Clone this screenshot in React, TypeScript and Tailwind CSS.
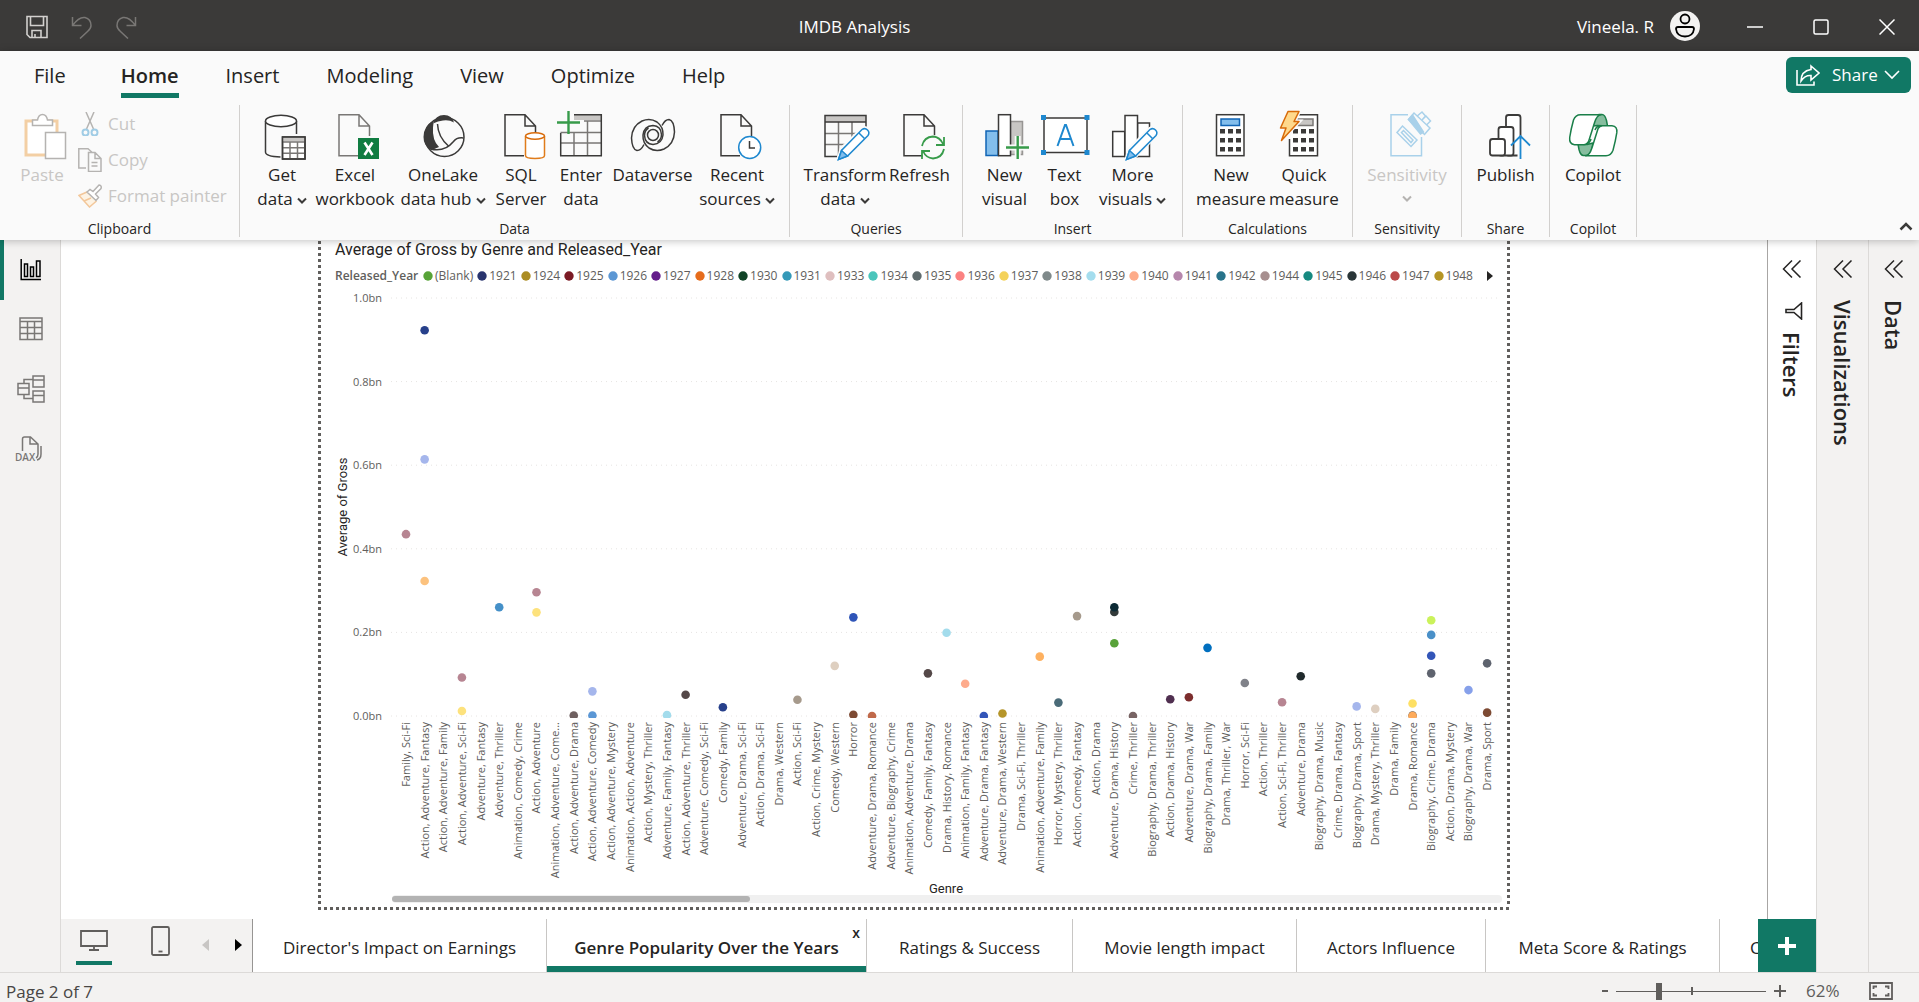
import React from 'react';

type Kids = { children: React.ReactNode };

/* ---------- ribbon icons (48 x 48) ---------- */

const DARK = '#3b3a39';

function Big({ children }: Kids) {
  return (
    <svg viewBox="0 0 48 48" className="h-12 w-12 shrink-0 overflow-visible" fill="none" strokeWidth="1.5" stroke={DARK} aria-hidden="true">
      {children}
    </svg>
  );
}

function PageShape({ color = DARK }: { color?: string }) {
  return <path d="M38.5 25V15L28 3.7H8v41h19M28 3.7V15h10.5" stroke={color} />;
}

function Pencil() {
  return (
    <g>
      <path d="M17.5 48.5l3-10.5L41 18q3-2 5.500 .5t.5 5.500L27 44.500z" fill="#fafafa" stroke="#fafafa" strokeWidth="4" />
      <path d="M17.500 48.500l3-9L41 18.500q3-2 5.500 .5t.5 5.500L26.500 45z" fill="#fff" stroke="#1e88cf" />
      <path d="M17.500 48.500l3-9 6 5.500z" fill="#83beec" stroke="#1e88cf" />
      <path d="M38 22l5.500 5.500" stroke="#1e88cf" />
    </g>
  );
}

function GetDataIcon() {
  return (
    <Big>
      <path d="M7.500 10v31q0 4.500 15 5M38.500 10v13" />
      <ellipse cx="23" cy="10" rx="15.500" ry="5.700" fill="#fff" />
      <rect x="24.500" y="26" width="22.500" height="22" fill="#fff" />
      <rect x="25" y="26.500" width="21.500" height="4" fill="#c8c6c4" stroke="none" />
      <path d="M24.500 31H47M24.500 36.700H47M24.500 42.300H47M32 31v17M39.500 31v17" stroke="#797775" />
      <rect x="24.500" y="26" width="22.500" height="22" />
    </Big>
  );
}

function ExcelIcon() {
  return (
    <Big>
      <PageShape color="#797775" />
      <rect x="27" y="27" width="21" height="21" fill="#107c41" stroke="none" />
      <path d="M33.500 31.500l8 12.500M41.500 31.500l-8 12.500" stroke="#fff" strokeWidth="2.600" />
    </Big>
  );
}

function OneLakeIcon() {
  return (
    <Big>
      <circle cx="25.500" cy="26" r="19.500" fill="#fafafa" />
      <path d="M14.500 9.500Q4.500 15 4.500 26q0 8 6.500 12.500 4 0 9-2.500Q13 29 14 16.500q.5-4 .5-7z" fill={DARK} stroke="none" />
      <path d="M14 12.500q2.500-8.500 11-8.500 8 0 10 7.500-5-3-11-2-5 .7-10 3z" fill={DARK} stroke="none" />
      <path d="M18.500 13Q19 26 29.500 35M11.500 38q14 3.500 23-7.500 3.500-4.500 10-3.500" />
    </Big>
  );
}

function SqlIcon() {
  return (
    <Big>
      <PageShape />
      <path d="M28.500 25v19.500q0 3 9.500 3t9.500-3V25" fill="#fff" stroke="#e07c1b" />
      <ellipse cx="38" cy="25" rx="9.500" ry="3.200" fill="#fff" stroke="#d86b0a" />
    </Big>
  );
}

function EnterDataIcon() {
  return (
    <Big>
      <rect x="17" y="4" width="27" height="5" fill="#c8c6c4" stroke="none" />
      <path d="M27 10H44M27 21.500H44M3.500 21.500H27M3.500 32H44M17 21.500v23M30.500 10v34.500" stroke="#797775" />
      <path d="M17 3.700h27.300v41H3.700V22" />
      <path d="M0 11.500h23M11.500 0v23" stroke="#379b4a" strokeWidth="2.400" />
    </Big>
  );
}

function DataverseIcon() {
  return (
    <Big>
      <circle cx="24" cy="24" r="5.500" />
      <path d="M33 14.500q3-6 7-6 5 1 5.500 12.500Q45 33 35 38q-8 3.500-15-1-6.500-5-6-13 1-9 10-9.500 8 .5 8.500 9 0 5-4 7.500" />
      <path d="M15 33.500q-3 6-7 6-5-1-5.500-12.500Q3 15 13 10q8-3.500 15 1 6.500 5 6 13-1 9-10 9.500-8-.5-8.500-9 0-5 4-7.500" />
    </Big>
  );
}

function RecentIcon() {
  return (
    <Big>
      <PageShape />
      <circle cx="36.700" cy="36.500" r="11" fill="#fff" stroke="#1e88cf" />
      <path d="M36.500 30v7h5.500" />
    </Big>
  );
}

function TransformIcon() {
  return (
    <Big>
      <rect x="4" y="5" width="41" height="6" fill="#c8c6c4" stroke="none" />
      <path d="M4 22.500h33M4 33.500h23M17.500 11v34M31 11v18" stroke="#797775" />
      <path d="M45 18V4.500H4v41h12M4 11h41" />
      <Pencil />
    </Big>
  );
}

function RefreshIcon() {
  return (
    <Big>
      <PageShape />
      <circle cx="37" cy="37" r="13" fill="#fafafa" stroke="none" />
      <path d="M26 35q2-9 11-9.500 7 .5 10 7.500M48 26v8h-8M48 38q-2 9-11 9.500-7-.5-10-7.500M26 48v-8h8" stroke="#379b4a" strokeWidth="1.800" />
    </Big>
  );
}

function NewVisualIcon() {
  return (
    <Big>
      <rect x="29.500" y="10.500" width="12" height="33" fill="#c8c6c4" stroke="#979593" />
      <rect x="5" y="20" width="12" height="24.500" fill="#83beec" stroke="#1164b4" />
      <rect x="17.500" y="3.700" width="12" height="41" fill="#fff" />
      <path d="M25 36.500h23M36.700 25v23" stroke="#fafafa" strokeWidth="6" />
      <path d="M25 36.500h23M36.700 25v23" stroke="#379b4a" strokeWidth="2.400" />
    </Big>
  );
}

function TextBoxIcon() {
  return (
    <Big>
      <rect x="3" y="7" width="43" height="34.500" fill="#fff" />
      <path d="M16.500 35L24 14h1l7.500 21M19 28h11" stroke="#1e88cf" strokeWidth="2" />
      <g fill="#1e88cf" stroke="none">
        <rect x="0" y="4" width="5" height="5" />
        <rect x="43.500" y="4" width="5" height="5" />
        <rect x="0" y="39" width="5" height="5" />
        <rect x="43.500" y="39" width="5" height="5" />
      </g>
    </Big>
  );
}

function MoreVisualsIcon() {
  return (
    <Big>
      <rect x="28.500" y="12" width="12" height="33.500" fill="#fff" />
      <rect x="3.700" y="20.500" width="12" height="25" fill="#fff" />
      <rect x="16" y="4.500" width="12.500" height="41" fill="#fff" />
      <Pencil />
    </Big>
  );
}

function Keys() {
  return (
    <g fill={DARK} stroke="none">
      {[18, 27, 36].map((y) => [13, 21, 29].map((x) => <rect key={`${x}-${y}`} x={x} y={y} width="5" height="4.500" />))}
    </g>
  );
}

function MeasureIcon() {
  return (
    <Big>
      <rect x="9.500" y="3.700" width="27.500" height="41" fill="#fff" />
      <rect x="14" y="8" width="18.500" height="6.500" fill="#83beec" stroke="#1164b4" />
      <Keys />
    </Big>
  );
}

function QuickMeasureIcon() {
  return (
    <Big>
      <path d="M19 3.700h18.500v41H9.500V28" fill="#fff" />
      <rect x="18" y="8" width="15" height="6.500" fill="#c8c6c4" stroke="#797775" />
      <Keys />
      <path d="M8 .5h11L14 10.500h5L1.500 29.500 6 17H0z" fill="#fafafa" stroke="#fafafa" strokeWidth="4" />
      <path d="M8 .5h11L14 10.500h5L1.500 29.500 6 17H.5z" fill="#ffd98c" stroke="#d86b0a" strokeLinejoin="round" />
    </Big>
  );
}

function SensitivityIcon() {
  return (
    <Big>
      <g stroke="#a9d1ea">
        <path d="M25 3.700H8v41h30.500V26" />
        <path d="M33 6l6-5 3.500 4-3.500 4 4-4 4.500 5-6 6z" fill="#fafafa" />
        <path d="M25.500 8.500L31 2l16 15-5.500 6.500z" fill="#fafafa" />
        <path d="M25.500 8.500l4-4.500 11 17-3 2z" fill="#a9d1ea" />
        <path d="M14 21.500l5.500-6.500L34 29l-6 6.500z" fill="#fafafa" />
        <path d="M18.500 21.500l2-2L30 29l-2 2.500z" />
      </g>
    </Big>
  );
}

function PublishIcon() {
  return (
    <Big>
      <g fill="#fff" strokeWidth="1.800">
        <rect x="24" y="4" width="14.500" height="40.500" rx="2.500" />
        <rect x="16.500" y="16" width="15" height="28.500" rx="2.500" />
        <rect x="8" y="28" width="15" height="16.500" rx="2.500" />
      </g>
      <path d="M38.500 48V26" stroke="#fafafa" strokeWidth="6" />
      <path d="M38.500 48V25M29 34.500l9.500-9.500 9.500 9.500" stroke="#1e88cf" strokeWidth="1.800" />
    </Big>
  );
}

function CopilotIcon() {
  return (
    <Big>
      <g stroke="#1a7f49" strokeLinejoin="round">
        <path d="M24 15q1-11.500 6-11.500h3q3 0 4.500 6l1 5.500-10-.5zM24 32q-1.500 12.500-6.500 12.500h-3q-3 0-4.500-6L9 33l9 .5z" fill="#86bd9e" />
        <path d="M11.500 3.700H32q-4 0-6.500 8l-6 19q-1.500 3-4.500 3H5.500Q0 33 .7 26.500 2 18 4.500 9 6.500 3.700 11.500 3.700z" fill="#fff" />
        <path d="M37 44.700H16.500q4 0 6.500-8l6-19q1.500-3 4.500-3H43q5.500 .5 4.800 7-1.300 8.500-3.800 17.500-2 5.500-7 5.500z" fill="#fff" />
        <path d="M26 19q1.500-4 5-4M22 28q-1 4-5 5" />
      </g>
    </Big>
  );
}

function PasteIcon() {
  return (
    <Big>
      <rect x="8" y="10" width="31" height="34" fill="#fff" stroke="#f3cfa4" strokeWidth="3" />
      <path d="M14.500 14.500V9h5q1-5.500 5-5.500t5 5.500h5v5.500z" fill="#fff" stroke="#b5b3b1" />
      <rect x="27.500" y="21.500" width="20" height="26" fill="#fff" stroke="#b5b3b1" />
    </Big>
  );
}

/* ---------- small helpers ---------- */

function Chevron({ className }: { className: string }) {
  return (
    <svg viewBox="0 0 10 8" className={className} fill="none" stroke="currentColor" strokeWidth="2" aria-hidden="true">
      <path d="M1 1.500l4 4 4-4" />
    </svg>
  );
}

function RibbonButton({ icon, first, second, menu, disabled, width }: {
  icon: React.ReactNode; first: string; second?: string; menu?: boolean; disabled?: boolean; width: string;
}) {
  return (
    <button type="button" disabled={disabled} className={`flex shrink-0 flex-col items-center text-[17px] leading-6 whitespace-nowrap ${width} ${disabled ? 'text-[#c8c6c4]' : 'text-[#252423]'}`}>
      {icon}
      <span className="mt-1">{first}</span>
      {(second || menu) && (
        <span className="flex items-center gap-1">
          {second}
          {menu && <Chevron className={`h-2 w-2.5 ${disabled ? 'mt-2 text-[#b5b3b1]' : 'mt-1 text-[#3b3a39]'}`} />}
        </span>
      )}
    </button>
  );
}

function Group({ name, width, children }: Kids & { name: string; width: string }) {
  return (
    <section aria-label={name} className={`flex shrink-0 flex-col justify-between border-r border-[#d2d0ce] ${width}`}>
      <div className="flex justify-center pt-1.5">{children}</div>
      <h2 className="text-center text-sm leading-4 text-[#252423]">{name}</h2>
    </section>
  );
}

/* ---------- title bar ---------- */

function TitleBar() {
  return (
    <header className="grid h-[51px] shrink-0 grid-cols-[1fr_auto_1fr] items-center bg-[#3b3a39] text-[17px] leading-6 text-white">
      <div className="flex items-center gap-[22px] pl-[25px] pt-0.5">
        <button type="button" aria-label="Save">
          <svg viewBox="0 0 24 24" className="h-6 w-6" fill="none" stroke="#d2d0ce" strokeWidth="1.600">
            <path d="M2 1.500h20v21H5l-3-3zM5.500 1.500v9h13v-9M7 22.500v-7h9v7M10 22.500V19" />
          </svg>
        </button>
        <button type="button" aria-label="Undo">
          <svg viewBox="0 0 22 24" className="h-6 w-[22px]" fill="none" stroke="#797775" strokeWidth="1.500">
            <path d="M1.500 2v8.500h9M1.500 10.500Q8 1.500 14 2.500q6 1.500 6 8 0 3-3.500 6L9 23.500" />
          </svg>
        </button>
        <button type="button" aria-label="Redo">
          <svg viewBox="0 0 22 24" className="h-6 w-[22px]" fill="none" stroke="#797775" strokeWidth="1.500">
            <path d="M20.500 2v8.500h-9M20.500 10.500Q14 1.500 8 2.500q-6 1.500-6 8 0 3 3.500 6l7.500 7" />
          </svg>
        </button>
      </div>
      <h1 className="mr-[210px] pt-0.5">IMDB Analysis</h1>
      <div className="-ml-[210px] flex items-center justify-end">
        <span className="pt-0.5">Vineela. R</span>
        <svg viewBox="0 0 30 30" className="ml-4 h-[30px] w-[30px]" aria-hidden="true">
          <circle cx="15" cy="15" r="15" fill="#f3f2f1" />
          <circle cx="15" cy="8" r="4.500" fill="none" stroke="#000" strokeWidth="1.800" />
          <path d="M8 16h14q2 0 2 2-1 7.500-9 7.500T6 18q0-2 2-2z" fill="none" stroke="#000" strokeWidth="1.800" />
        </svg>
        <div className="ml-[47px] mr-6 flex items-center gap-[50px] pt-0.5">
          <button type="button" aria-label="Minimize">
            <svg viewBox="0 0 16 16" className="h-4 w-4" stroke="#fff" strokeWidth="1.500"><path d="M0 8h16" /></svg>
          </button>
          <button type="button" aria-label="Maximize">
            <svg viewBox="0 0 16 16" className="h-4 w-4" fill="none" stroke="#fff" strokeWidth="1.500"><rect x="1" y="1" width="14" height="14" rx="1.500" /></svg>
          </button>
          <button type="button" aria-label="Close">
            <svg viewBox="0 0 16 16" className="h-4 w-4" stroke="#fff" strokeWidth="1.500"><path d="M.5 .5l15 15M15.500 .5l-15 15" /></svg>
          </button>
        </div>
      </div>
    </header>
  );
}

/* ---------- ribbon ---------- */

function RibbonTabs() {
  const names = ['File', 'Home', 'Insert', 'Modeling', 'View', 'Optimize', 'Help'];
  return (
    <div className="flex h-[49px] items-start justify-between pl-[34px] pr-2">
      <nav className="flex gap-[47px] pt-[9px] text-[20px] leading-8 text-[#252423]">
        {names.map((n) => (
          <button key={n} type="button" className={`flex h-[38px] items-start border-b-[5px] ${n === 'Home' ? 'ml-2 border-[#117865] font-semibold' : 'border-transparent'}`}>
            {n}
          </button>
        ))}
      </nav>
      <button type="button" className="mt-1.5 flex h-9 w-[125px] items-center rounded-md bg-[#117865] pl-2.5 text-[17px] text-white">
        <svg viewBox="0 0 24 22" className="h-[22px] w-6" fill="none" stroke="#fff" strokeWidth="1.600">
          <path d="M1 6v15h17v-3.500M15 2l8 7-8 7v-4.500q-6-.5-10 5.500 0-10 10-11.500z" />
        </svg>
        <span className="ml-3">Share</span>
        <svg viewBox="0 0 16 10" className="ml-1.5 h-2.5 w-4" fill="none" stroke="#fff" strokeWidth="1.600"><path d="M1 1l7 7 7-7" /></svg>
      </button>
    </div>
  );
}

function Ribbon() {
  return (
    <div className="relative z-10 shrink-0 bg-[#fafafa] shadow-[0_1px_8px_rgba(0,0,0,0.25)]">
      <RibbonTabs />
      <div className="flex h-[140px] pb-[3px] pt-[5px]">
        <Group name="Clipboard" width="w-[240px]">
          <div className="flex w-full pl-[18px]">
            <RibbonButton icon={<PasteIcon />} first="Paste" disabled width="w-12" />
            <div className="ml-3 mt-px flex flex-col text-[17px] leading-6 text-[#c8c6c4]">
              <button type="button" disabled className="flex h-9 items-start gap-1.5">
                <svg viewBox="0 0 24 24" className="h-6 w-6" fill="none" strokeWidth="1.500" stroke="#b5b3b1">
                  <path d="M8 0l7.500 17M16 0L8.500 17" />
                  <circle cx="7.500" cy="20.500" r="3" stroke="#a0cce5" strokeWidth="2" />
                  <circle cx="16.500" cy="20.500" r="3" stroke="#a0cce5" strokeWidth="2" />
                </svg>
                Cut
              </button>
              <button type="button" disabled className="flex h-9 items-start gap-1.5">
                <svg viewBox="0 0 24 24" className="h-6 w-6" fill="none" strokeWidth="1.500" stroke="#b5b3b1">
                  <path d="M8 20H.8V.8H10l4 3.500M10.500 4.500H17l6 6v13H10.500zM17 4.500v6h6M13.500 14.500h6M13.500 18h6" />
                </svg>
                Copy
              </button>
              <button type="button" disabled className="flex h-8 items-start gap-1.5">
                <svg viewBox="0 0 24 24" className="h-6 w-6" fill="none" strokeWidth="1.500">
                  <path d="M9 8L1 11.500 11.500 23l7-6" stroke="#f3c79a" fill="#fdf3e4" />
                  <path d="M6 17l7-3" stroke="#f3c79a" />
                  <path d="M9 8l3-2.500 3 2 6-6.500q3 .5 2 3.500l-5.500 5.500 3 3.500-2.500 3z" stroke="#b5b3b1" fill="#fff" />
                </svg>
                Format painter
              </button>
            </div>
          </div>
        </Group>
        <Group name="Data" width="w-[550px]">
          <RibbonButton icon={<GetDataIcon />} first="Get" second="data" menu width="w-16" />
          <RibbonButton icon={<ExcelIcon />} first="Excel" second="workbook" width="w-[82px]" />
          <RibbonButton icon={<OneLakeIcon />} first="OneLake" second="data hub" menu width="w-[94px]" />
          <RibbonButton icon={<SqlIcon />} first="SQL" second="Server" width="w-[62px]" />
          <RibbonButton icon={<EnterDataIcon />} first="Enter" second="data" width="w-[58px]" />
          <RibbonButton icon={<DataverseIcon />} first="Dataverse" width="w-[85px]" />
          <RibbonButton icon={<RecentIcon />} first="Recent" second="sources" menu width="w-[84px]" />
        </Group>
        <Group name="Queries" width="w-[173px]">
          <RibbonButton icon={<TransformIcon />} first="Transform" second="data" menu width="w-[87px]" />
          <RibbonButton icon={<RefreshIcon />} first="Refresh" width="w-[62px]" />
        </Group>
        <Group name="Insert" width="w-[220px]">
          <RibbonButton icon={<NewVisualIcon />} first="New" second="visual" width="w-[58px]" />
          <RibbonButton icon={<TextBoxIcon />} first="Text" second="box" width="w-[62px]" />
          <RibbonButton icon={<MoreVisualsIcon />} first="More" second="visuals" menu width="w-[74px]" />
        </Group>
        <Group name="Calculations" width="w-[170px]">
          <RibbonButton icon={<MeasureIcon />} first="New" second="measure" width="w-[73px]" />
          <RibbonButton icon={<QuickMeasureIcon />} first="Quick" second="measure" width="w-[73px]" />
        </Group>
        <Group name="Sensitivity" width="w-[109px]">
          <RibbonButton icon={<SensitivityIcon />} first="Sensitivity" menu disabled width="w-20" />
        </Group>
        <Group name="Share" width="w-[88px]">
          <RibbonButton icon={<PublishIcon />} first="Publish" width="w-16" />
        </Group>
        <Group name="Copilot" width="w-[87px]">
          <RibbonButton icon={<CopilotIcon />} first="Copilot" width="w-16" />
        </Group>
        <button type="button" aria-label="Collapse ribbon" className="mb-1.5 ml-auto mr-1.5 self-end">
          <svg viewBox="0 0 14 10" className="h-2.5 w-3.5" fill="none" stroke={DARK} strokeWidth="2.500"><path d="M1.500 8.500L7 3l5.500 5.500" /></svg>
        </button>
      </div>
    </div>
  );
}

/* ---------- left rail ---------- */

function Rail() {
  return (
    <nav className="flex w-[61px] shrink-0 flex-col border-r border-[#dcdad8] bg-[#f3f2f1] text-[#797775]">
      <button type="button" aria-label="Report view" className="flex h-[60px] items-center border-l-4 border-[#117865] pl-4">
        <svg viewBox="0 0 22 22" className="h-[22px] w-[22px]" fill="none" stroke="#000" strokeWidth="1.500">
          <path d="M1.200 0v20.500H21M4.500 5h3v12.500h-3zM10.500 8h3v9.500h-3zM16.500 2h3.500v15.500h-3.500z" />
        </svg>
      </button>
      <button type="button" aria-label="Table view" className="flex h-[58px] items-center pl-[19px]">
        <svg viewBox="0 0 24 24" className="h-6 w-6" fill="none" stroke="currentColor" strokeWidth="1.500">
          <path d="M1 1h22v21.500H1zM1 4.500h22M1 10.500h22M1 16.500h22M8.500 4.500v18M15.500 4.500v18" />
        </svg>
      </button>
      <button type="button" aria-label="Model view" className="flex h-[62px] items-center pl-[17px]">
        <svg viewBox="0 0 28 28" className="h-7 w-7" fill="none" stroke="currentColor" strokeWidth="1.500">
          <path d="M16 1h11v11H16zM16 5h11M16 16h11v11H16zM16 20.500h11M1 8.500h11v11H1zM1 13h11M7 8.500v-4h9M7 19.500v4h9" />
        </svg>
      </button>
      <button type="button" aria-label="DAX query view" className="flex h-[58px] items-center pl-[15px]">
        <svg viewBox="0 0 28 26" className="h-[26px] w-7" fill="none" stroke="currentColor" strokeWidth="1.500">
          <path d="M7.500 15V3q0-2 2-2h6l7.500 7v10q0 3-2 4M15 1v7h8M26 10v8q0 5-4 6" />
          <text x="0" y="24.500" fontSize="10" fontWeight="600" fill="currentColor" stroke="none">DAX</text>
        </svg>
      </button>
    </nav>
  );
}

/* ---------- chart ---------- */

const LEGEND: [string, string][] = [
  ['(Blank)', '#57a337'], ['1921', '#28346e'], ['1924', '#ab8c22'], ['1925', '#7b1a24'], ['1926', '#5c97d4'],
  ['1927', '#641d8b'], ['1928', '#e66c1c'], ['1930', '#114427'], ['1931', '#3599b8'], ['1933', '#dfbfbf'],
  ['1934', '#4ac5bb'], ['1935', '#5f6b6d'], ['1936', '#fb8281'], ['1937', '#f4d25a'], ['1938', '#7f898a'],
  ['1939', '#a4ddee'], ['1940', '#fdab89'], ['1941', '#b687ac'], ['1942', '#28738a'], ['1944', '#a78f8f'],
  ['1945', '#168980'], ['1946', '#293537'], ['1947', '#bb4a4a'], ['1948', '#b59525'],
];

const GENRES = [
  'Family, Sci-Fi', 'Action, Adventure, Fantasy', 'Action, Adventure, Family', 'Action, Adventure, Sci-Fi',
  'Adventure, Fantasy', 'Adventure, Thriller', 'Animation, Comedy, Crime', 'Action, Adventure',
  'Animation, Adventure, Come...', 'Action, Adventure, Drama', 'Action, Adventure, Comedy',
  'Action, Adventure, Mystery', 'Animation, Action, Adventure', 'Action, Mystery, Thriller',
  'Adventure, Family, Fantasy', 'Action, Adventure, Thriller', 'Adventure, Comedy, Sci-Fi', 'Comedy, Family',
  'Adventure, Drama, Sci-Fi', 'Action, Drama, Sci-Fi', 'Drama, Western', 'Action, Sci-Fi',
  'Action, Crime, Mystery', 'Comedy, Western', 'Horror', 'Adventure, Drama, Romance',
  'Adventure, Biography, Crime', 'Animation, Adventure, Drama', 'Comedy, Family, Fantasy',
  'Drama, History, Romance', 'Animation, Family, Fantasy', 'Adventure, Drama, Fantasy',
  'Adventure, Drama, Western', 'Drama, Sci-Fi, Thriller', 'Animation, Adventure, Family',
  'Horror, Mystery, Thriller', 'Action, Comedy, Fantasy', 'Action, Drama', 'Adventure, Drama, History',
  'Crime, Thriller', 'Biography, Drama, Thriller', 'Action, Drama, History', 'Adventure, Drama, War',
  'Biography, Drama, Family', 'Drama, Thriller, War', 'Horror, Sci-Fi', 'Action, Thriller',
  'Action, Sci-Fi, Thriller', 'Adventure, Drama', 'Biography, Drama, Music', 'Crime, Drama, Fantasy',
  'Biography, Drama, Sport', 'Drama, Mystery, Thriller', 'Drama, Family', 'Drama, Romance',
  'Biography, Crime, Drama', 'Action, Drama, Mystery', 'Biography, Drama, War', 'Drama, Sport',
];

/* [genre number, average gross in bn, colour] */
const POINTS: [number, number, string][] = [
  [1, 0.435, '#b78592'], [2, 0.923, '#27408b'], [2, 0.614, '#a5b6ec'], [2, 0.323, '#fcc27e'],
  [4, 0.092, '#b78592'], [4, 0.012, '#fde27d'], [6, 0.26, '#4590c8'], [8, 0.296, '#b78592'],
  [8, 0.248, '#fde27d'], [10, 0.001, '#6f6060'], [11, 0.059, '#a5b6ec'], [11, 0.001, '#5b97d5'],
  [15, 0.002, '#a3dcec'], [16, 0.051, '#544848'], [18, 0.021, '#27408b'], [22, 0.039, '#a69a8c'],
  [24, 0.12, '#decfc0'], [25, 0.236, '#2f55b8'], [25, 0.003, '#7d4a33'], [26, 0, '#c0694a'],
  [29, 0.102, '#544848'], [30, 0.199, '#a3dcec'], [31, 0.077, '#feab8c'], [32, 0, '#3355b8'],
  [33, 0.006, '#b5952a'], [35, 0.142, '#feb160'], [36, 0.032, '#4a6b78'], [37, 0.239, '#a69a8c'],
  [39, 0.249, '#333a3a'], [39, 0.26, '#0c2a35'], [39, 0.174, '#58a239'], [40, 0, '#786464'],
  [42, 0.04, '#502f50'], [43, 0.045, '#7c2d2d'], [44, 0.163, '#006fbf'], [46, 0.079, '#808289'],
  [48, 0.033, '#b78592'], [49, 0.095, '#202a2c'], [52, 0.023, '#a5b6ec'], [53, 0.017, '#decfc0'],
  [55, 0.03, '#fee063'], [55, 0.001, '#6e5a4a'], [55, 0, '#feab5b'], [56, 0.229, '#cbf25b'],
  [56, 0.194, '#4a90c8'], [56, 0.144, '#3355b8'], [56, 0.102, '#5e636e'], [58, 0.062, '#86a0ea'],
  [59, 0.126, '#5e636e'], [59, 0.008, '#7d4a33'],
];

const ZERO_Y = 426;
const xOf = (genre: number) => 85 + (genre - 1) * 18.64;
const yOf = (value: number) => ZERO_Y - value * 418;

function Plot() {
  return (
    <svg viewBox="0 0 1186 605" className="h-[605px] w-full" role="img" aria-label="Average of Gross by Genre">
      <defs>
        <clipPath id="plot-area"><rect x="70" y="0" width="1116" height={ZERO_Y + 2} /></clipPath>
      </defs>
      {[0, 0.2, 0.4, 0.6, 0.8, 1].map((v) => (
        <g key={v}>
          <line x1="70" x2="1179" y1={yOf(v)} y2={yOf(v)} stroke="#e6e4e2" strokeDasharray="1 4" />
          <text x="61" y={yOf(v) + 4} textAnchor="end" fontSize="11" fill="#605e5c">{v.toFixed(1)}bn</text>
        </g>
      ))}
      <g clipPath="url(#plot-area)">
        {POINTS.map(([g, v, c], i) => <circle key={i} cx={xOf(g)} cy={yOf(v)} r="4.300" fill={c} />)}
      </g>
      {GENRES.map((name, i) => (
        <text key={name} transform={`translate(${xOf(i + 1) + 4} 432) rotate(-90)`} textAnchor="end" fontSize="11" fill="#605e5c">{name}</text>
      ))}
      <text transform="translate(26 217) rotate(-90)" textAnchor="middle" fontSize="13" fill="#252423" className="font-['Roboto']">Average of Gross</text>
      <text x="625" y="603" textAnchor="middle" fontSize="13" fill="#252423" className="font-['Roboto']">Genre</text>
    </svg>
  );
}

function ReportCanvas() {
  return (
    <main className="flex min-w-0 flex-1 justify-center overflow-hidden bg-white">
      <div className="flex h-[670px] w-[1192px] shrink-0 flex-col">
        <div className="flex min-h-0 flex-1">
          <div className="w-[3px] shrink-0 bg-[repeating-linear-gradient(to_bottom,transparent_0_1px,#605e5c_1px_4px,transparent_4px_6px)]" />
          <figure className="min-w-0 flex-1">
            <figcaption className="pl-3.5 text-base leading-5 text-[#252423] font-['Roboto']">Average of Gross by Genre and Released_Year</figcaption>
            <div className="mb-1 mt-1.5 flex h-5 items-center pl-3.5 text-xs leading-5 text-[#605e5c]">
              <span className="w-[88px] shrink-0 font-semibold">Released_Year</span>
              <ul className="flex w-[1050px] justify-between">
                {LEGEND.map(([label, color]) => (
                  <li key={label} className="flex items-center gap-0.5">
                    <svg viewBox="0 0 10 10" className="h-2.5 w-2.5"><circle cx="5" cy="5" r="4.700" fill={color} /></svg>
                    {label}
                  </li>
                ))}
              </ul>
              <button type="button" aria-label="Next legend items" className="ml-3.5">
                <svg viewBox="0 0 6 10" className="h-2.5 w-1.5"><path d="M0 0l6 5-6 5z" fill="#252423" /></svg>
              </button>
            </div>
            <Plot />
            <div className="ml-[71px] mr-[5px] h-2 rounded-full bg-[#f0f0f0] py-px">
              <div className="h-1.5 w-[358px] rounded-full bg-[#b3b3b3]" />
            </div>
          </figure>
          <div className="w-[3px] shrink-0 bg-[repeating-linear-gradient(to_bottom,transparent_0_1px,#605e5c_1px_4px,transparent_4px_6px)]" />
        </div>
        <div className="h-[3px] shrink-0 bg-[repeating-linear-gradient(to_right,#605e5c_0_3px,transparent_3px_6px)]" />
      </div>
    </main>
  );
}

/* ---------- page tabs ---------- */

function PageTabs() {
  const tab = 'relative flex shrink-0 items-center justify-center border-r border-[#c8c6c4] pt-1 whitespace-nowrap';
  return (
    <div className="flex h-[53px] shrink-0 bg-white text-[17px] text-[#252423]">
      <div className="flex w-[192px] shrink-0 border-r border-[#979593] bg-[#f3f2f1]">
        <button type="button" aria-label="Desktop layout" className="ml-[15px] flex h-[46px] w-9 justify-center border-b-4 border-[#117865] pt-[11px]">
          <svg viewBox="0 0 28 21" className="h-[21px] w-7 shrink-0" fill="none" stroke="#605e5c" strokeWidth="1.800"><path d="M1 1h26v15H1zM14 16v4M9 20h10" /></svg>
        </button>
        <button type="button" aria-label="Mobile layout" className="ml-[39px] flex pt-[7px]">
          <svg viewBox="0 0 19 30" className="h-[30px] w-[19px]" fill="none" stroke="#605e5c" strokeWidth="1.800"><rect x="1" y="1" width="17" height="28" rx="1.500" /><path d="M7.500 25.500h4" /></svg>
        </button>
        <button type="button" aria-label="Previous pages" disabled className="ml-8 flex pt-5">
          <svg viewBox="0 0 7 12" className="h-3 w-[7px]"><path d="M7 0L0 6l7 6z" fill="#c8c6c4" /></svg>
        </button>
        <button type="button" aria-label="Next pages" className="ml-[26px] flex pt-5">
          <svg viewBox="0 0 7 12" className="h-3 w-[7px]"><path d="M0 0l7 6-7 6z" fill="#000" /></svg>
        </button>
      </div>
      <div className="flex min-w-0 flex-1 overflow-hidden">
        <button type="button" className={`w-[294px] ${tab}`}>Director's Impact on Earnings</button>
        <div className={`w-[320px] ${tab}`}>
          <button type="button" className="flex h-full w-full items-center justify-center font-semibold">Genre Popularity Over the Years</button>
          <button type="button" aria-label="Delete page" className="absolute right-1.5 top-1 text-sm leading-5 font-semibold">x</button>
          <span className="absolute inset-x-0 bottom-0 h-1.5 bg-[#117865]" />
        </div>
        <button type="button" className={`w-[206px] ${tab}`}>Ratings &amp; Success</button>
        <button type="button" className={`w-[224px] ${tab}`}>Movie length impact</button>
        <button type="button" className={`w-[189px] ${tab}`}>Actors Influence</button>
        <button type="button" className={`w-[234px] ${tab}`}>Meta Score &amp; Ratings</button>
        <button type="button" className="shrink-0 pl-[30px] pt-1">C</button>
      </div>
      <button type="button" aria-label="New page" className="flex w-[58px] shrink-0 items-center justify-center bg-[#117865]">
        <svg viewBox="0 0 18 18" className="h-[18px] w-[18px]" stroke="#fff" strokeWidth="4"><path d="M0 9h18M9 0v18" /></svg>
      </button>
    </div>
  );
}

/* ---------- side panes ---------- */

function Expand({ label }: { label: string }) {
  return (
    <button type="button" aria-label={`Expand ${label}`} className="mt-5">
      <svg viewBox="0 0 20 18" className="h-[18px] w-5" fill="none" stroke="#252423" strokeWidth="1.500"><path d="M10 .5L1.500 9l8.500 8.500M18.500 .5L10 9l8.500 8.500" /></svg>
    </button>
  );
}

const PANE = 'flex shrink-0 flex-col items-center border-l text-[22px] leading-7 font-semibold text-[#252423]';

function FiltersPane() {
  return (
    <section className={`${PANE} w-[49px] border-[#a8a6a4] bg-white`} aria-label="Filters">
      <Expand label="Filters" />
      <svg viewBox="0 0 18 18" className="ml-1 mt-6 h-[18px] w-[18px]" fill="none" stroke="#252423" strokeWidth="1.600"><path d="M16.500 1v16L9 10.500H1v-3h8z" /></svg>
      <h2 className="mt-3 [writing-mode:vertical-rl]">Filters</h2>
    </section>
  );
}

function SidePane({ name, width }: { name: string; width: string }) {
  return (
    <section className={`${PANE} ${width} border-[#dcdad8] bg-[#f3f2f1]`} aria-label={name}>
      <Expand label={name} />
      <h2 className="mt-[22px] [writing-mode:vertical-rl]">{name}</h2>
    </section>
  );
}

/* ---------- status bar ---------- */

function StatusBar() {
  return (
    <footer className="flex h-[30px] shrink-0 items-end justify-between border-t border-[#dcdad8] bg-[#f3f2f1] pl-1.5 pr-[26px] text-[17px] leading-5 text-[#484644]">
      <span>Page 2 of 7</span>
      <div className="mb-px flex items-center">
        <button type="button" aria-label="Zoom out" className="flex w-1.5">
          <svg viewBox="0 0 6 12" className="h-3 w-1.5" stroke="#605e5c" strokeWidth="2"><path d="M0 6h6" /></svg>
        </button>
        <label className="relative ml-2 flex h-[18px] w-[150px] items-center">
          <span className="absolute left-[75px] top-[5px] h-2 w-0.5 bg-[#605e5c]" />
          <input
            type="range" min="0" max="100" defaultValue="28" aria-label="Zoom level"
            className="relative h-[18px] w-full appearance-none bg-[linear-gradient(#605e5c,#605e5c)] bg-[length:100%_1px] bg-center bg-no-repeat [&::-webkit-slider-thumb]:h-[17px] [&::-webkit-slider-thumb]:w-1.5 [&::-webkit-slider-thumb]:appearance-none [&::-webkit-slider-thumb]:bg-[#605e5c]"
          />
        </label>
        <button type="button" aria-label="Zoom in" className="ml-2 flex w-3 justify-center">
          <svg viewBox="0 0 12 12" className="h-3 w-3" stroke="#605e5c" strokeWidth="2"><path d="M0 6h12M6 0v12" /></svg>
        </button>
        <span className="ml-5 w-[53px] text-[#605e5c]">62%</span>
        <button type="button" aria-label="Fit to page" className="ml-2.5">
          <svg viewBox="0 0 24 18" className="h-[18px] w-6" fill="none" stroke="#605e5c" strokeWidth="1.800"><path d="M1 1h22v16H1zM4.500 7V4.500H8M16 4.500h3.500V7M19.500 11v2.500H16M8 13.500H4.500V11" /></svg>
        </button>
      </div>
    </footer>
  );
}

export default function App() {
  return (
    <div className="flex h-screen flex-col overflow-hidden bg-white font-['Open_Sans','Noto_Sans',sans-serif]">
      <TitleBar />
      <Ribbon />
      <div className="flex min-h-0 flex-1">
        <Rail />
        <div className="flex min-w-0 flex-1 flex-col">
          <div className="flex min-h-0 flex-1">
            <ReportCanvas />
            <FiltersPane />
          </div>
          <PageTabs />
        </div>
        <SidePane name="Visualizations" width="w-[52px]" />
        <SidePane name="Data" width="w-[51px]" />
      </div>
      <StatusBar />
    </div>
  );
}
